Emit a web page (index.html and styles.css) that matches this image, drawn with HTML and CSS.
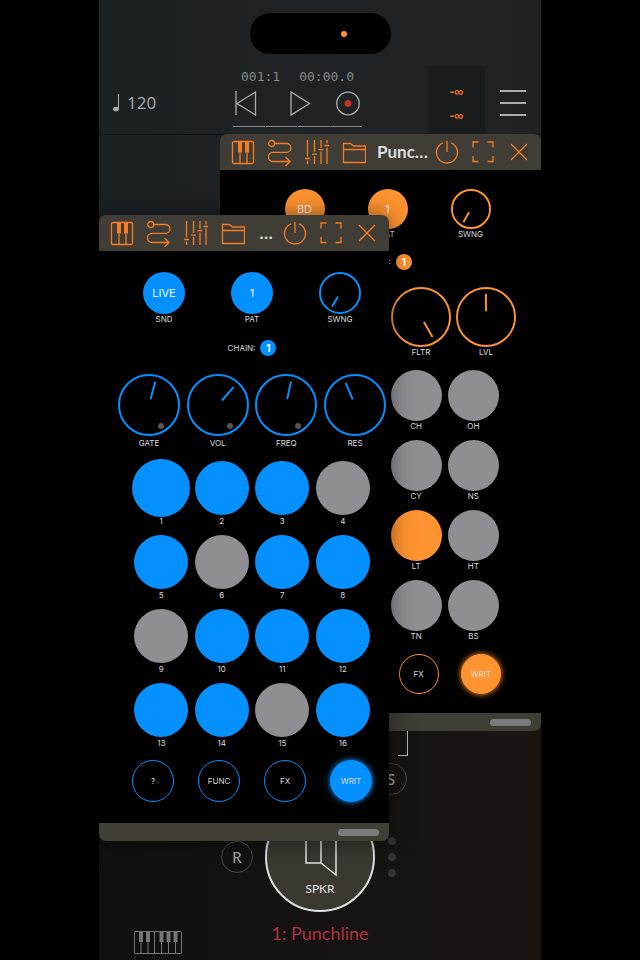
FILE: index.html
```html
<!DOCTYPE html>
<html lang="en">
<head>
<meta charset="utf-8">
<meta name="viewport" content="width=device-width, initial-scale=1">
<title>Punchline</title>
<link rel="stylesheet" href="styles.css">
</head>
<body>
<svg class="sprite" aria-hidden="true">
  <symbol id="i-piano" viewBox="0 0 24 28"><rect x="1.500" y="3.500" width="21" height="22" rx="1.500"/><path d="M9 14.500v11M16 14.500v11"/><path class="solid" d="M7 4h4v10.500H7zM14 4h4v10.500h-4z"/></symbol>
  <symbol id="i-route" viewBox="0 0 24 28"><circle cx="3.700" cy="5.500" r="3"/><path d="M7 5.500h11.500a4.300 4.300 0 0 1 0 8.800H5a4.600 4.600 0 0 0 0 9.200H22M17.500 19l4.500 4.500-4.500 4.500"/></symbol>
  <symbol id="i-sliders" viewBox="0 0 24 28"><path d="M2.500 2v16.500M2.500 22.500V26M9.500 2v12M9.500 18v8M16 2v8M16 13.500V26M22 2v3.500M22 9.500V26M0 20.500h5M7 16.200h5M13.500 11.700h5M19.500 7.500H24"/></symbol>
  <symbol id="i-folder" viewBox="0 0 24 28"><path d="M1.500 24.500v-19h7l3 2.500h12v16.500zM1.500 11.500h22"/></symbol>
  <symbol id="i-power" viewBox="0 0 24 28"><path d="M8 4.800a10.500 10.500 0 1 0 8 0M12 3v11"/></symbol>
  <symbol id="i-full" viewBox="0 0 24 28"><path d="M2 9.500V4h5.500M16.500 4H22v5.500M22 18v5.500h-5.500M7.500 23.500H2V18"/></symbol>
  <symbol id="i-close" viewBox="0 0 24 28"><path d="M4 6l16 16M20 6L4 22"/></symbol>
</svg>

<main class="phone">
  <div class="island"><span class="island-dot"></span></div>

  <header class="toolbar">
    <button class="tempo" aria-label="Tempo">
      <svg width="6" height="18" viewBox="0 0 6 18"><path d="M5.500 0v15" stroke="currentColor"/><ellipse cx="3" cy="15" rx="3" ry="2.300" fill="currentColor"/></svg>
      <span>120</span>
    </button>
    <div class="transport">
      <div class="clock"><span>001:1</span><span>00:00.0</span></div>
      <div class="transport-buttons">
        <button aria-label="Rewind"><svg width="24" height="26" viewBox="0 0 24 26"><path d="M1 1v24M20.500 2v23L2 13.500z"/></svg></button>
        <button aria-label="Play"><svg width="24" height="26" viewBox="0 0 24 26"><path d="M5 2v23l18.500-11.500z"/></svg></button>
        <button aria-label="Record"><svg width="24" height="26" viewBox="0 0 24 26"><circle cx="12" cy="13.500" r="11.300"/><circle class="rec" cx="12" cy="13.500" r="3.400"/></svg></button>
      </div>
      <div class="beats"><i></i><i></i><i></i><i></i></div>
    </div>
    <div class="meter"><span>-∞</span><span>-∞</span></div>
    <button class="menu" aria-label="Menu"><i></i><i></i><i></i></button>
  </header>

  <section class="mixer">
    <div class="strip">
      <span class="bracket"></span>
      <button class="round solo">S</button>
      <button class="round mute">R</button>
      <button class="speaker">
        <svg width="34" height="48" viewBox="0 0 34 48"><path d="M3 11h15v24H3zM18 11L33 1v46L18 35"/></svg>
        <span>SPKR</span>
      </button>
      <div class="dots"><i></i><i></i><i></i></div>
    </div>
    <div class="footer">
      <button class="keys" aria-label="Keyboard">
        <svg width="48" height="23" viewBox="0 0 48 23"><rect x=".5" y=".5" width="47" height="22" rx="1"/><path d="M7 11v11M14 11v11M20.500 1v21M27.500 11v11M34.500 11v11M41.500 11v11"/><path class="black" d="M5 1h4v10H5zM12 1h4v10h-4zM25.500 1h4v10h-4zM32.500 1h4v10h-4zM39.500 1h4v10h-4z"/></svg>
      </button>
      <h1 class="channel">1: Punchline</h1>
    </div>
  </section>

  <section class="window drums" aria-label="Punchline drums">
    <header class="titlebar">
      <div class="tools">
        <button aria-label="Keyboard"><svg><use href="#i-piano"/></svg></button>
        <button aria-label="Routing"><svg><use href="#i-route"/></svg></button>
        <button aria-label="Mixer"><svg><use href="#i-sliders"/></svg></button>
        <button aria-label="Presets"><svg><use href="#i-folder"/></svg></button>
      </div>
      <h2>Punc…</h2>
      <div class="tools right">
        <button aria-label="Power"><svg><use href="#i-power"/></svg></button>
        <button aria-label="Full screen"><svg><use href="#i-full"/></svg></button>
        <button aria-label="Close"><svg><use href="#i-close"/></svg></button>
      </div>
    </header>
    <div class="panel">
      <div class="row top">
        <button class="cell"><span class="disc small on">BD</span></button>
        <button class="cell"><span class="disc small on">1</span><span>PAT</span></button>
        <label class="cell"><span class="dial small"><svg viewBox="0 0 42 42"><circle cx="21" cy="21" r="20"/><path d="M21 17V5" transform="rotate(210 21 21)"/></svg><input type="range"></span><span>SWNG</span></label>
      </div>
      <div class="chain"><span>CHAIN:</span><button class="badge">1</button></div>
      <div class="row knobs">
        <label class="cell"><span class="dial"><svg viewBox="0 0 62 62"><circle cx="31" cy="31" r="30"/><path d="M31 25V7" transform="rotate(150 31 31)"/></svg><input type="range"></span><span>FLTR</span></label>
        <label class="cell"><span class="dial"><svg viewBox="0 0 62 62"><circle cx="31" cy="31" r="30"/><path d="M31 25V7"/></svg><input type="range"></span><span>LVL</span></label>
      </div>
      <div class="pads">
        <button class="cell third"><span class="pad"></span><span>CH</span></button>
        <button class="cell"><span class="pad"></span><span>OH</span></button>
        <button class="cell third"><span class="pad"></span><span>CY</span></button>
        <button class="cell"><span class="pad"></span><span>NS</span></button>
        <button class="cell third"><span class="pad on"></span><span>LT</span></button>
        <button class="cell"><span class="pad"></span><span>HT</span></button>
        <button class="cell third"><span class="pad"></span><span>TN</span></button>
        <button class="cell"><span class="pad"></span><span>BS</span></button>
      </div>
      <div class="row actions">
        <button class="action third">FX</button>
        <button class="action on">WRIT</button>
      </div>
    </div>
    <footer class="grip"><span></span></footer>
  </section>

  <section class="window steps" aria-label="Punchline steps">
    <header class="titlebar">
      <div class="tools">
        <button aria-label="Keyboard"><svg><use href="#i-piano"/></svg></button>
        <button aria-label="Routing"><svg><use href="#i-route"/></svg></button>
        <button aria-label="Mixer"><svg><use href="#i-sliders"/></svg></button>
        <button aria-label="Presets"><svg><use href="#i-folder"/></svg></button>
      </div>
      <h2>…</h2>
      <div class="tools right">
        <button aria-label="Power"><svg><use href="#i-power"/></svg></button>
        <button aria-label="Full screen"><svg><use href="#i-full"/></svg></button>
        <button aria-label="Close"><svg><use href="#i-close"/></svg></button>
      </div>
    </header>
    <div class="panel">
      <div class="row top">
        <button class="cell"><span class="disc small on">LIVE</span><span>SND</span></button>
        <button class="cell"><span class="disc small on">1</span><span>PAT</span></button>
        <label class="cell"><span class="dial small"><svg viewBox="0 0 42 42"><circle cx="21" cy="21" r="20"/><path d="M21 17V5" transform="rotate(210 21 21)"/></svg><input type="range"></span><span>SWNG</span></label>
      </div>
      <div class="chain"><span>CHAIN:</span><button class="badge">1</button></div>
      <div class="row knobs">
        <label class="cell"><span class="dial"><svg viewBox="0 0 62 62"><circle cx="31" cy="31" r="30"/><path d="M31 25V7" transform="rotate(15 31 31)"/><circle class="lock" cx="43" cy="52" r="3"/></svg><input type="range"></span><span>GATE</span></label>
        <label class="cell"><span class="dial"><svg viewBox="0 0 62 62"><circle cx="31" cy="31" r="30"/><path d="M31 25V7" transform="rotate(41 31 31)"/><circle class="lock" cx="43" cy="52" r="3"/></svg><input type="range"></span><span>VOL</span></label>
        <label class="cell"><span class="dial"><svg viewBox="0 0 62 62"><circle cx="31" cy="31" r="30"/><path d="M31 25V7" transform="rotate(12 31 31)"/><circle class="lock" cx="43" cy="52" r="3"/></svg><input type="range"></span><span>FREQ</span></label>
        <label class="cell"><span class="dial"><svg viewBox="0 0 62 62"><circle cx="31" cy="31" r="30"/><path d="M31 25V7" transform="rotate(-23 31 31)"/></svg><input type="range"></span><span>RES</span></label>
      </div>
      <div class="pads">
        <button class="cell"><span class="pad on current"></span><span>1</span></button>
        <button class="cell"><span class="pad on"></span><span>2</span></button>
        <button class="cell"><span class="pad on"></span><span>3</span></button>
        <button class="cell"><span class="pad"></span><span>4</span></button>
        <button class="cell"><span class="pad on"></span><span>5</span></button>
        <button class="cell"><span class="pad"></span><span>6</span></button>
        <button class="cell"><span class="pad on"></span><span>7</span></button>
        <button class="cell"><span class="pad on"></span><span>8</span></button>
        <button class="cell"><span class="pad"></span><span>9</span></button>
        <button class="cell"><span class="pad on"></span><span>10</span></button>
        <button class="cell"><span class="pad on"></span><span>11</span></button>
        <button class="cell"><span class="pad on"></span><span>12</span></button>
        <button class="cell"><span class="pad on"></span><span>13</span></button>
        <button class="cell"><span class="pad on"></span><span>14</span></button>
        <button class="cell"><span class="pad"></span><span>15</span></button>
        <button class="cell"><span class="pad on"></span><span>16</span></button>
      </div>
      <div class="row actions">
        <button class="action">?</button>
        <button class="action">FUNC</button>
        <button class="action">FX</button>
        <button class="action on">WRIT</button>
      </div>
    </div>
    <footer class="grip"><span></span></footer>
  </section>
</main>
</body>
</html>
```
FILE: styles.css
```css
* { box-sizing: border-box; }

body {
  margin: 0;
  background: #000;
  color: #a9abac;
  font-family: Lato, "Open Sans", sans-serif;
}

button {
  margin: 0;
  padding: 0;
  border: 0;
  background: none;
  color: inherit;
  font: inherit;
  cursor: pointer;
}

svg { display: block; fill: none; overflow: visible; }
h1, h2 { margin: 0; font-weight: 400; }

.sprite { position: absolute; width: 0; height: 0; }

.phone {
  position: relative;
  display: flex;
  flex-direction: column;
  max-width: 442px;
  min-height: 100vh;
  margin: 0 auto;
  overflow: hidden;
  background:
    linear-gradient(to right, #101011, #1b1512) 0 100% / 100% 40% no-repeat,
    linear-gradient(to right, #1c2124, #1f2325 50%, #202122);
}

/* Status area */
.island {
  display: flex;
  align-items: center;
  justify-content: center;
  align-self: center;
  width: 141px;
  height: 41px;
  margin-top: 13px;
  padding-left: 48px;
  border-radius: 21px;
  background: #000;
}

.island-dot { width: 6px; height: 6px; border-radius: 50%; background: #ff9430; }

/* Toolbar */
.toolbar {
  display: flex;
  align-items: stretch;
  min-height: 69px;
  margin-top: 12px;
  padding: 0 15px 0 14px;
  border-bottom: 1px solid #111416;
}

.tempo {
  display: flex;
  flex: 1;
  align-items: center;
  gap: 8px;
  padding-top: 6px;
  font: 17px/20px "Open Sans", sans-serif;
}

.transport {
  display: flex;
  flex-direction: column;
  width: 129px;
  margin-right: 66px;
  padding-top: 4px;
}

.clock {
  display: flex;
  justify-content: space-between;
  padding: 0 8px;
  color: #85888a;
  font: 13px/13px "DejaVu Sans Mono", monospace;
}

.transport-buttons { display: flex; justify-content: space-between; margin-top: 7px; padding: 0 2px; }
.transport-buttons svg { stroke: #a9abac; stroke-width: 1.3; }
.transport-buttons .rec { fill: #d0301f; stroke: none; }

.beats { display: grid; grid-template-columns: repeat(4, 1fr); gap: 1px; margin-top: 10px; }
.beats i { height: 1px; background: #858889; }

.meter {
  display: flex;
  flex-direction: column;
  width: 57px;
  margin-right: 15px;
  padding-top: 14px;
  background: #191c1d;
  color: #f0781e;
  font: bold 13px/24px "Liberation Sans", sans-serif;
  text-align: center;
}

.menu { display: flex; flex-direction: column; justify-content: center; gap: 10px; padding-top: 6px; }
.menu i { width: 26px; height: 2px; background: #a9abac; }

/* Mixer behind the plug-in windows */
.mixer { display: flex; flex: 1; flex-direction: column; justify-content: flex-end; padding-bottom: 6px; }

.strip {
  display: grid;
  grid-template-columns: 1fr 110px 1fr;
  grid-template-rows: 40px 32px auto;
  row-gap: 7px;
  align-items: center;
}

.bracket {
  grid-column: 3;
  width: 10px;
  height: 40px;
  margin-left: 23px;
  border: solid #b4b4b4;
  border-width: 0 1px 1px 0;
}

.round {
  width: 32px;
  height: 32px;
  border: 1px solid #47474a;
  border-radius: 50%;
  font-size: 15px;
}

.solo { grid-column: 3; }
.mute { grid-column: 1; justify-self: end; margin-right: 12px; }

.speaker {
  display: flex;
  grid-column: 2;
  flex-direction: column;
  align-items: center;
  gap: 6px;
  height: 110px;
  padding-top: 24px;
  border: 2px solid #dedede;
  border-radius: 50%;
  background: #3b3832;
  color: #e4e4e4;
  font-size: 12px;
  line-height: 14px;
}

.speaker svg { stroke: #e4e4e4; stroke-width: 1.5; }

.dots { display: flex; flex-direction: column; gap: 8px; margin-left: 13px; }
.dots i { width: 8px; height: 8px; border-radius: 50%; background: #353231; }

.footer {
  display: grid;
  grid-template-columns: 1fr auto 1fr;
  min-height: 32px;
  margin-top: 10px;
}

.keys { align-self: end; justify-self: start; margin-left: 35px; }
.keys svg { stroke: #77777a; }
.keys .black { fill: #77777a; stroke: none; }
.channel { color: #ac3345; font-size: 18px; line-height: 22px; }

/* Floating plug-in windows */
.window { position: absolute; border-radius: 7px; }

.drums {
  --accent: #ff9430;
  --small: 40px;
  --dial: 60px;
  --pad: 51px;
  top: 134px;
  right: 0;
  left: 121px;
}

.steps {
  --accent: #0590ff;
  --small: 42px;
  --dial: 62px;
  --pad: 54px;
  top: 215px;
  right: 152px;
  left: 0;
  box-shadow: 0 0 24px rgba(0, 0, 0, .5);
}

.titlebar {
  display: flex;
  align-items: center;
  height: 36px;
  padding: 0 10px 0 11px;
  border-radius: 7px 7px 0 0;
  background: #403d37;
}

.titlebar h2 {
  flex: 1;
  padding-left: 4px;
  color: #dededb;
  font-size: 17px;
  font-weight: 700;
  line-height: 24px;
  text-align: center;
  white-space: nowrap;
}

.tools { display: flex; gap: 13px; }
.tools.right { gap: 12px; }
.tools svg { width: 24px; height: 28px; stroke: #f57c20; stroke-width: 1.3; }
.solid { fill: #f57c20; stroke: none; }

.panel {
  background: #000;
  color: #dcdcdc;
  font: 8px/10px Inter, sans-serif;
}

.drums .panel { padding: 19px 25px 19px 39px; }
.steps .panel { padding: 21px 3px 21px 19px; }

.cell { display: flex; flex-direction: column; align-items: center; }
.top { display: grid; grid-template-columns: repeat(3, 1fr); align-items: start; }
.drums .top { margin: 0 4px; }
.steps .top { margin: 0 2px; }

.disc {
  display: flex;
  align-items: center;
  justify-content: center;
  width: var(--small);
  height: var(--small);
  border-radius: 50%;
  background: var(--accent);
  color: #eef4fa;
  font-size: 11px;
}

.dial { position: relative; width: var(--dial); height: var(--dial); }
.dial.small { width: var(--small); height: var(--small); }
.dial svg { stroke: var(--accent); stroke-width: 2; }
.dial .lock { fill: #555; stroke: none; }
.dial input { position: absolute; inset: 0; width: 100%; height: 100%; margin: 0; opacity: 0; }

.chain { display: flex; align-items: center; justify-content: center; gap: 5px; }
.drums .chain { margin-top: 15px; }
.steps .chain { margin-top: 16px; }

.badge {
  width: 16px;
  height: 16px;
  border-radius: 50%;
  background: var(--accent);
  color: #fff;
  font-size: 11px;
  font-weight: 600;
  line-height: 16px;
}

.knobs { display: flex; justify-content: space-between; }
.drums .knobs { justify-content: flex-end; gap: 5px; margin-top: 17px; }
.steps .knobs { margin-top: 18px; }
.steps .knobs .cell { gap: 2px; }

.pads { display: grid; grid-template-columns: repeat(4, 1fr); row-gap: 9px; }
.drums .pads { margin: 13px 14px 0; }
.steps .pads { margin: 13px 13px 0; }
.steps .pads .cell { gap: 1px; }
.third { grid-column: 3; }

.pad { width: var(--pad); height: var(--pad); border-radius: 50%; background: #8f8e93; }
.pad.on { background: var(--accent); }
.pad.current { box-shadow: 0 0 0 2px var(--accent); }

.actions { display: grid; grid-template-columns: repeat(4, 1fr); justify-items: center; }
.drums .actions { margin: 13px 4px 0; }
.steps .actions { margin: 12px 2px 0; }

.action {
  width: var(--small);
  height: var(--small);
  border: 1px solid var(--accent);
  border-radius: 50%;
}

.action.on { background: var(--accent); box-shadow: 0 0 6px var(--accent); }

.grip {
  display: flex;
  align-items: center;
  justify-content: flex-end;
  height: 18px;
  padding-right: 10px;
  border-radius: 0 0 7px 7px;
  background: #403d37;
}

.grip span { width: 41px; height: 7px; border-radius: 4px; background: #7a797b; }
```
